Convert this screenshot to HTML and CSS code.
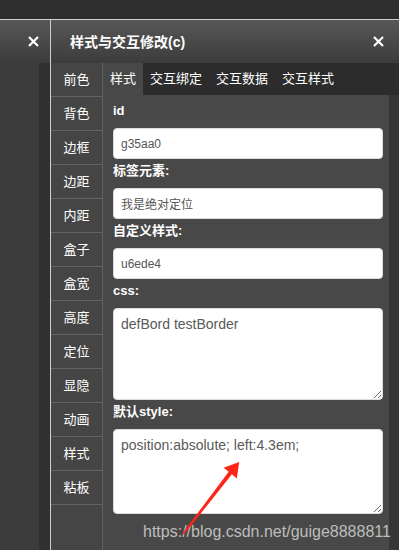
FILE: index.html
```html
<!DOCTYPE html>
<html>
<head>
<title>样式与交互修改</title>
<link rel="stylesheet" href="styles.css">
</head>
<body>

<div class="topbar"></div>

<div class="main">
	<div class="leftpane">
		<div class="lhead">
			<svg class="close" width="11" height="11" viewBox="0 0 11 11"><path d="M1 1L10 10M10 1L1 10" stroke="#fff" stroke-width="2.2"/></svg>
		</div>
		<div class="lbody">
			<div class="lfill"></div>
			<div class="ltrack"></div>
		</div>
	</div>

	<div class="pane">
		<div class="phead">
			<span class="title">样式与交互修改(c)</span>
			<svg class="close" width="11" height="11" viewBox="0 0 11 11"><path d="M1 1L10 10M10 1L1 10" stroke="#fff" stroke-width="2.2"/></svg>
		</div>
		<div class="pbody">
			<ul class="nav">
				<li>前色</li>
				<li>背色</li>
				<li>边框</li>
				<li>边距</li>
				<li>内距</li>
				<li>盒子</li>
				<li>盒宽</li>
				<li>高度</li>
				<li>定位</li>
				<li>显隐</li>
				<li>动画</li>
				<li>样式</li>
				<li>粘板</li>
			</ul>
			<div class="work">
				<div class="tabs">
					<span class="tab active">样式</span>
					<span class="tab">交互绑定</span>
					<span class="tab">交互数据</span>
					<span class="tab">交互样式</span>
				</div>
				<div class="area">
					<div class="form">
						<div class="lbl">id</div>
						<input class="field" type="text" value="g35aa0">
						<div class="lbl">标签元素:</div>
						<input class="field" type="text" value="我是绝对定位">
						<div class="lbl">自定义样式:</div>
						<input class="field" type="text" value="u6ede4">
						<div class="lbl">css:</div>
						<textarea class="box cssbox">defBord testBorder</textarea>
						<div class="lbl">默认style:</div>
						<textarea class="box stylebox">position:absolute; left:4.3em;</textarea>
					</div>
					<div class="track"></div>
				</div>
			</div>
		</div>
	</div>
</div>

<div class="mark">https://blog.csdn.net/guige8888811</div>

<svg class="arrow" width="399" height="550" viewBox="0 0 399 550">
	<polygon points="182.3,533.6 228.7,471.8 223.6,467.8 239.2,462 236.8,478.4 231.9,474.2 184,534.6" fill="#ff2418"/>
</svg>

</body>
</html>
```

FILE: styles.css
```css
body {
  margin: 0;
  width: 399px;
  height: 550px;
  overflow: hidden;
  background-color: #2e2e2e;
  font-family: "Liberation Sans", "Noto Sans CJK SC", sans-serif;
  position: relative;
}

.topbar {
  height: 19px;
  background-color: #2e2e2e;
}

.main {
  display: flex;
  height: 530px;
  border-top: 1px solid #cfcfcf;
}

.leftpane {
  width: 50px;
  display: flex;
  flex-direction: column;
}

.lhead, .phead {
  height: 43px;
  background: linear-gradient(#575757, #3c3c3c);
  display: flex;
  align-items: center;
}

.lhead {
  justify-content: flex-end;
  padding-right: 11px;
}

.lbody {
  flex: 1;
  display: flex;
}

.lfill {
  width: 39px;
  background-color: #3c3c3c;
}

.ltrack {
  flex: 1;
  background-color: #303030;
}

.pane {
  flex: 1;
  display: flex;
  flex-direction: column;
  border-left: 1px solid #cfcfcf;
}

.phead {
  justify-content: space-between;
  padding: 0 15px 0 19px;
}

.title {
  color: #fff;
  font-weight: bold;
  font-size: 14px;
  line-height: 18px;
}

.pbody {
  flex: 1;
  display: flex;
}

.nav {
  list-style: none;
  margin: 0;
  padding: 0;
  width: 51px;
  background-color: #454545;
  border-right: 1px solid #5d646b;
}

.nav li {
  height: 33px;
  line-height: 33px;
  border-bottom: 1px solid #5d646b;
  text-align: center;
  color: #fff;
  font-size: 13px;
}

.work {
  flex: 1;
  display: flex;
  flex-direction: column;
}

.tabs {
  height: 32px;
  background-color: #2c2c2c;
  display: flex;
}

.tab {
  padding: 0 7px;
  line-height: 32px;
  color: #fff;
  font-size: 13px;
}

.tab.active {
  background-color: #484848;
}

.area {
  flex: 1;
  display: flex;
}

.form {
  width: 270px;
  padding: 6px 6px 0 10px;
  background-color: #484848;
}

.track {
  flex: 1;
  background-color: #363636;
}

.lbl {
  color: #fff;
  font-size: 13px;
  font-weight: bold;
  line-height: 20px;
  margin-bottom: 7px;
}

.field, .box {
  display: block;
  box-sizing: border-box;
  width: 270px;
  margin: 0 0 2px 0;
  border: 1px solid #dcdcdc;
  border-radius: 4px;
  background-color: #fff;
  color: #555;
  font-family: "Liberation Sans", "Noto Sans CJK SC", sans-serif;
  outline: none;
}

.field {
  height: 31px;
  padding: 0 7px;
  font-size: 12px;
}

.box {
  padding: 6px 7px;
  font-size: 14px;
  line-height: 18px;
  color: #5a5a5a;
}

.cssbox {
  height: 92px;
}

.stylebox {
  height: 85px;
}

.mark {
  position: absolute;
  left: 143px;
  top: 522px;
  color: #bdbdbd;
  font-size: 16px;
  line-height: 20px;
}

.arrow {
  position: absolute;
  left: 0;
  top: 0;
}
```
